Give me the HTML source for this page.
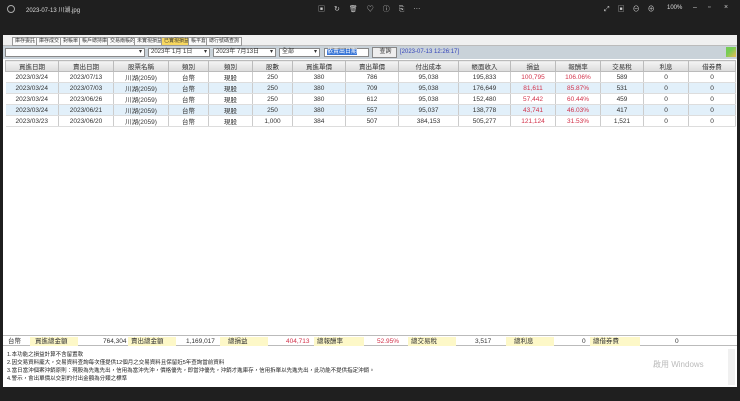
<!DOCTYPE html><html><head><meta charset="utf-8"><style>
*{margin:0;padding:0;box-sizing:border-box}
body{width:740px;height:401px;background:#1f1f1f;font-family:"Liberation Sans","Noto Sans CJK TC",sans-serif;position:relative;overflow:hidden;color:#333}
.abs{position:absolute;white-space:nowrap}
.t{font-size:6px;color:#ddd}
#panel{left:3px;top:35px;width:734px;height:352px;background:#fff}
#tabs{left:3px;top:35px;width:734px;height:11px;background:#f0f0f0;border-bottom:1px solid #bbb}
.tab{position:absolute;top:2px;height:9px;border:1px solid #999;background:#fafafa;font-size:5px;line-height:7px;padding:0 2px;color:#333}
#filter{left:3px;top:46px;width:734px;height:13px;background:#c9d2d9}
.inp{position:absolute;top:2px;height:9px;background:#fff;border:1px solid #888;font-size:6px;line-height:7px;padding-left:2px}
table{position:absolute;left:5px;top:60px;width:730px;border-collapse:collapse;font-size:6.5px;table-layout:fixed}
th{height:11px;background:linear-gradient(#f4f4f4,#dcdcdc);border:1px solid #bbb;font-weight:normal;color:#333}
td{height:10.4px;text-align:center;border-right:1px solid #ccc;border-bottom:1px solid #ddd;color:#333}
tr.a td{background:#e2f0fa}
.r{color:#d2324a}
#sum{left:3px;top:335px;width:734px;height:11px;background:#fff;border-top:1px solid #bbb;border-bottom:1px solid #bbb;font-size:6.5px}
.s{position:absolute;top:1px;height:9px;line-height:9px}
.y{background:#fdf8c8}
#notes{left:3px;top:347px;width:734px;height:40px;background:#fff;font-size:5.5px;line-height:8px;padding:4px 0 0 4px;color:#222}
</style></head><body>
<div class="abs" style="left:7px;top:5px;width:8px;height:8px;border:1px solid #aaa;border-radius:50%"></div>
<div class="abs t" style="left:26px;top:5px">2023-07-13 川湖.jpg</div>
<div class="abs t" style="left:318px;top:4px;color:#ccc;font-size:7px;letter-spacing:9px">▣↻🗑♡ⓘ⎘⋯</div>
<div class="abs t" style="left:604px;top:4px;color:#ccc;font-size:7px;letter-spacing:8px">⤢▣⊖⊕</div>
<div class="abs t" style="left:667px;top:5px">100%</div>
<div class="abs t" style="left:693px;top:4px;font-size:7px;color:#ccc">–</div>
<div class="abs t" style="left:708px;top:4px;font-size:7px;color:#ccc">▫</div>
<div class="abs t" style="left:724px;top:4px;font-size:7px;color:#ccc">×</div>
<div id="panel" class="abs"></div>
<div id="tabs" class="abs">
<span class="tab" style="left:9px">庫存委託</span><span class="tab" style="left:33px">庫存成交</span><span class="tab" style="left:57px">對帳單</span><span class="tab" style="left:76px">帳戶總持庫</span><span class="tab" style="left:104px">交易兩帳的</span><span class="tab" style="left:131px">未實現損益</span><span class="tab" style="left:158px;background:#f8d860">已實現損益</span><span class="tab" style="left:185px">帳平倉</span><span class="tab" style="left:203px">總行號碼查詢</span>
</div>
<div id="filter" class="abs">
<div class="inp" style="left:2px;width:140px"><span style="position:absolute;right:2px">▾</span></div>
<div class="inp" style="left:145px;width:62px">2023年 1月 1日<span style="position:absolute;right:2px">▾</span></div>
<div class="inp" style="left:210px;width:63px">2023年 7月13日<span style="position:absolute;right:2px">▾</span></div>
<div class="inp" style="left:276px;width:41px">全部<span style="position:absolute;right:2px">▾</span></div>
<div class="inp" style="left:321px;width:45px;"><span style="background:#3b78d8;color:#fff">依賣出日期</span></div>
<div class="inp" style="left:369px;width:25px;top:1px;height:11px;background:#eee;text-align:center;line-height:9px">查詢</div>
<div class="abs" style="left:397px;top:3px;font-size:6px;color:#3344bb">[2023-07-13 12:26:17]</div>
<div class="abs" style="left:723px;top:1px;width:10px;height:10px;background:linear-gradient(135deg,#7c5 40%,#eb5)"></div>
</div>
<table>
<colgroup><col style="width:53px"><col style="width:55px"><col style="width:55px"><col style="width:40px"><col style="width:44px"><col style="width:40px"><col style="width:53px"><col style="width:53px"><col style="width:60px"><col style="width:52px"><col style="width:45px"><col style="width:45px"><col style="width:43px"><col style="width:45px"><col style="width:47px"></colgroup>
<tr><th>買進日期</th><th>賣出日期</th><th>股票名稱</th><th>類別</th><th>類別</th><th>股數</th><th>買進單價</th><th>賣出單價</th><th>付出成本</th><th>帳面收入</th><th>損益</th><th>報酬率</th><th>交易稅</th><th>利息</th><th>借券費</th></tr>
<tr><td>2023/03/24</td><td>2023/07/13</td><td>川湖(2059)</td><td>台幣</td><td>現股</td><td>250</td><td>380</td><td>786</td><td>95,038</td><td>195,833</td><td class="r">100,795</td><td class="r">106.06%</td><td>589</td><td>0</td><td>0</td></tr>
<tr class="a"><td>2023/03/24</td><td>2023/07/03</td><td>川湖(2059)</td><td>台幣</td><td>現股</td><td>250</td><td>380</td><td>709</td><td>95,038</td><td>176,649</td><td class="r">81,611</td><td class="r">85.87%</td><td>531</td><td>0</td><td>0</td></tr>
<tr><td>2023/03/24</td><td>2023/06/26</td><td>川湖(2059)</td><td>台幣</td><td>現股</td><td>250</td><td>380</td><td>612</td><td>95,038</td><td>152,480</td><td class="r">57,442</td><td class="r">60.44%</td><td>459</td><td>0</td><td>0</td></tr>
<tr class="a"><td>2023/03/24</td><td>2023/06/21</td><td>川湖(2059)</td><td>台幣</td><td>現股</td><td>250</td><td>380</td><td>557</td><td>95,037</td><td>138,778</td><td class="r">43,741</td><td class="r">46.03%</td><td>417</td><td>0</td><td>0</td></tr>
<tr><td>2023/03/23</td><td>2023/06/20</td><td>川湖(2059)</td><td>台幣</td><td>現股</td><td>1,000</td><td>384</td><td>507</td><td>384,153</td><td>505,277</td><td class="r">121,124</td><td class="r">31.53%</td><td>1,521</td><td>0</td><td>0</td></tr>
</table>
<div id="sum" class="abs">
<span class="s" style="left:5px">台幣</span>
<span class="s y" style="left:27px;width:48px;padding-left:5px">買進總金額</span>
<span class="s" style="left:100px">764,304</span>
<span class="s y" style="left:125px;width:48px;padding-left:3px">賣出總金額</span>
<span class="s" style="left:183px">1,169,017</span>
<span class="s y" style="left:217px;width:48px;padding-left:8px">總損益</span>
<span class="s r" style="left:283px">404,713</span>
<span class="s y" style="left:311px;width:50px;padding-left:3px">總報酬率</span>
<span class="s r" style="left:374px">52.95%</span>
<span class="s y" style="left:405px;width:48px;padding-left:3px">總交易稅</span>
<span class="s" style="left:472px">3,517</span>
<span class="s y" style="left:503px;width:48px;padding-left:8px">總利息</span>
<span class="s" style="left:579px">0</span>
<span class="s y" style="left:587px;width:50px;padding-left:3px">總借券費</span>
<span class="s" style="left:672px">0</span>
</div>
<div id="notes" class="abs">
1.本功能之損益計算不含留置款<br>2.因交易資料龐大，交易資料查詢每次僅提供12個月之交易資料且保留近5年查詢當前資料<br>3.當日當沖個案沖銷原則：現股為先進先出，信用為當沖先沖，價格優先，即當沖優先，沖銷才進庫存，信用拆單以先進先出，此功能不提供指定沖銷。<br>4.警示，會出單價以交割的付出金額為分類之標準
<div class="abs" style="right:2px;top:2px;width:7px;height:36px;background:#f0f0f0"></div>
<div class="abs" style="left:650px;top:14px;color:#bbb;font-size:8px">啟用 Windows</div>
</div>
</body></html>
